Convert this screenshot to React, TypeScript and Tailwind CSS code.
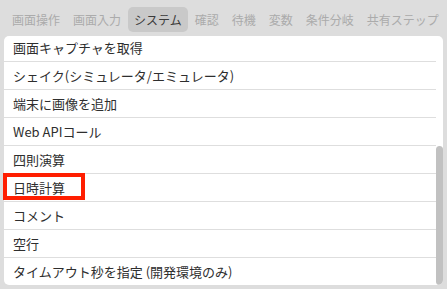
import React from "react";

const tabs = ["画面操作", "画面入力", "システム", "確認", "待機", "変数", "条件分岐", "共有ステップ"];

const items = [
  "画面キャプチャを取得",
  "シェイク(シミュレータ/エミュレータ)",
  "端末に画像を追加",
  "Web APIコール",
  "四則演算",
  "日時計算",
  "コメント",
  "空行",
  "タイムアウト秒を指定 (開発環境のみ)",
];

export default function App() {
  return (
    <div
      className="relative w-[447px] h-[289px] bg-[#dddddd] overflow-hidden"
      style={{ fontFamily: '"Noto Sans CJK JP", "Noto Sans", sans-serif' }}
    >
      {/* tab bar */}
      <div className="flex h-[36px] pt-[7px] pl-[5.5px] whitespace-nowrap">
        {tabs.map((t) => (
          <div
            key={t}
            className={
              t === "システム"
                ? "shrink-0 h-[25px] px-[6.5px] rounded-[5px] bg-[#c9c9c9] text-[#3a3a3a] text-[12px] leading-[25px]"
                : "shrink-0 h-[25px] px-[6.5px] text-[#ababab] text-[12px] leading-[25px]"
            }
          >
            {t}
          </div>
        ))}
      </div>

      {/* list panel */}
      <div className="relative ml-[4px] w-[439px] h-[249px] bg-white rounded-[5px] overflow-hidden">
        <div className="w-[432px] -mt-[2px]">
          {items.map((it, i) => (
            <div
              key={it}
              className={
                i < items.length - 1
                  ? "h-[28px] pl-[9px] border-b border-[#dedede] text-[13px] leading-[27px] text-[#2e2e2e] whitespace-nowrap"
                  : "h-[28px] pl-[9px] text-[13px] leading-[27px] text-[#2e2e2e] whitespace-nowrap"
              }
            >
              {it}
            </div>
          ))}
        </div>
        {/* scrollbar thumb */}
        <div className="absolute right-0 top-[110px] w-[7px] h-[139px] rounded-full bg-[#c1c1c1]" />
      </div>

      {/* highlight box */}
      <div className="absolute left-[3px] top-[173px] w-[82px] h-[27px] border-4 border-[#ff1e00]" />
    </div>
  );
}
